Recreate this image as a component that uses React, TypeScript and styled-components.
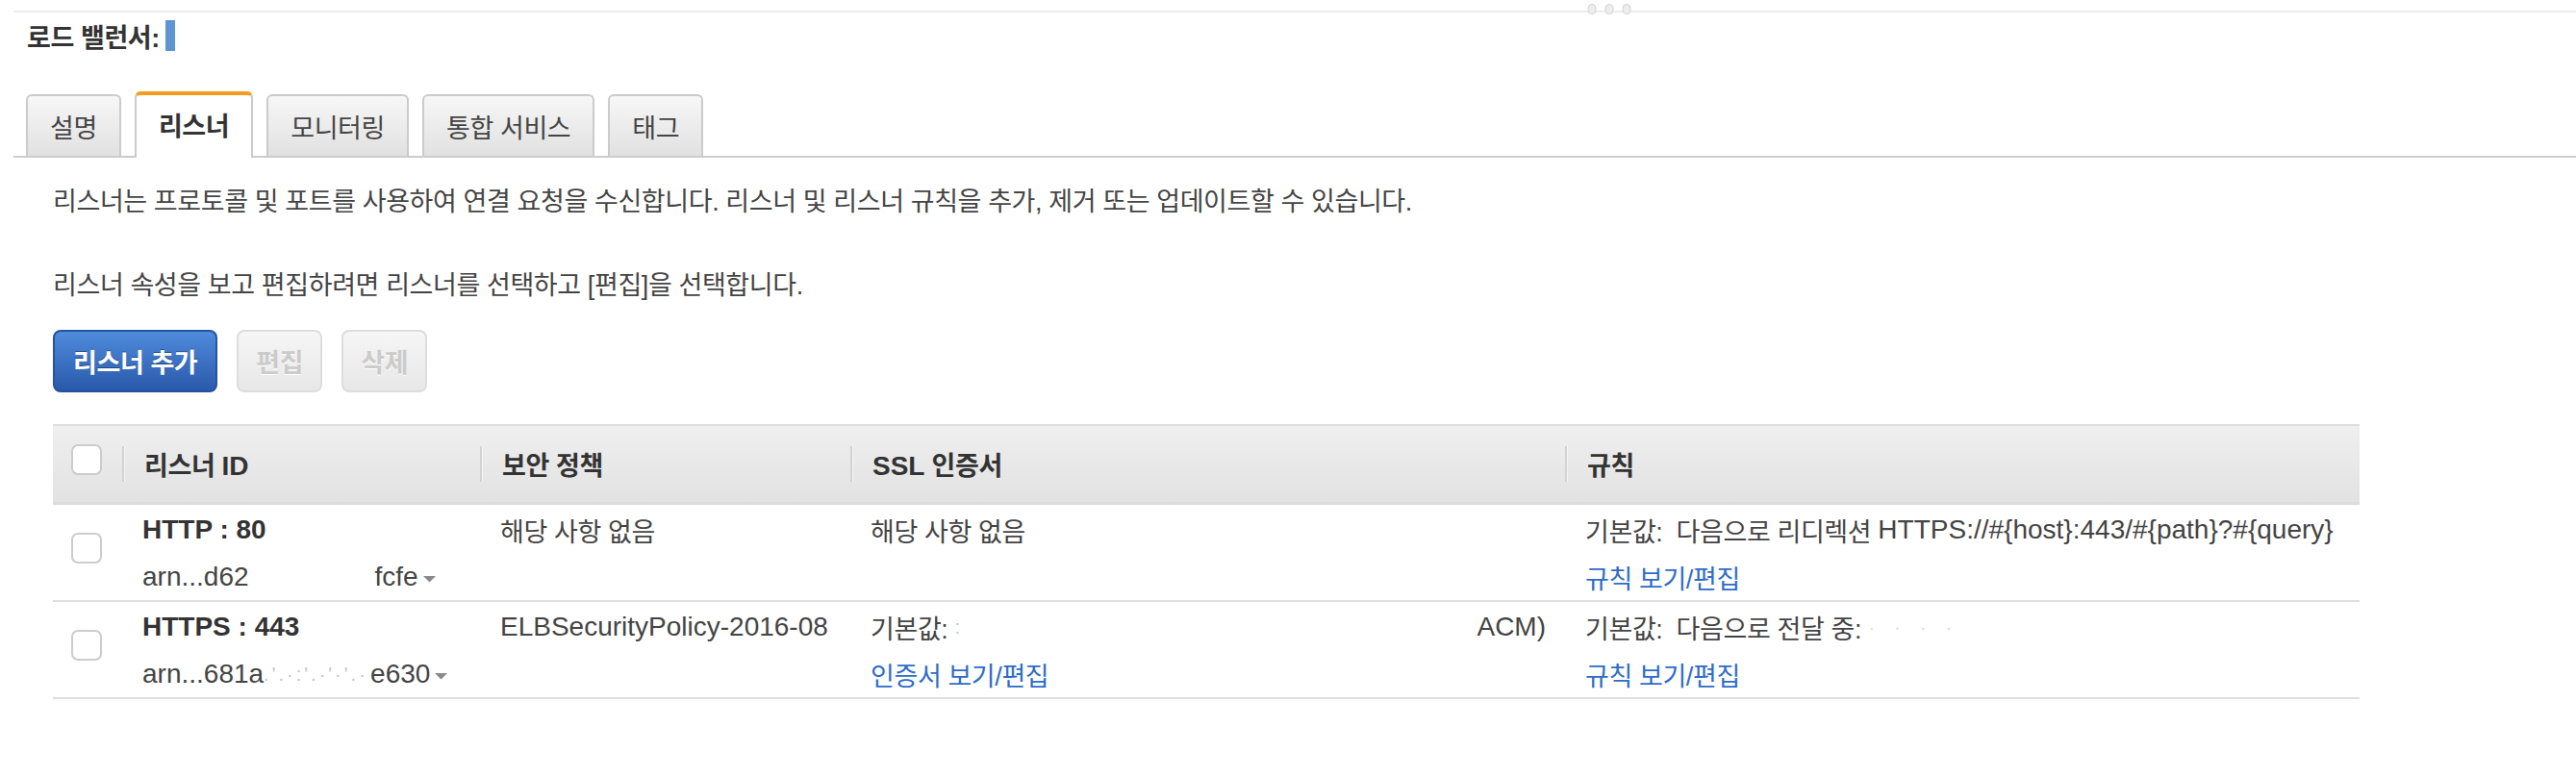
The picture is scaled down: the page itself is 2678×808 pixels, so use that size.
import React from "react";
import styled, { createGlobalStyle } from "styled-components";

const GlobalStyle = createGlobalStyle`
  html, body {
    margin: 0;
    padding: 0;
    background: #fff;
  }
  body {
    font-family: "Liberation Sans", "Noto Sans CJK KR", sans-serif;
    font-size: 27px;
    letter-spacing: -0.4px;
    color: #444;
    width: 2678px;
    height: 808px;
    overflow: hidden;
  }
`;

const TopBar = styled.div`
  position: relative;
  margin-left: 14px;
  padding-top: 11px;
`;

const TopRule = styled.div`
  height: 2px;
  background: #ececec;
`;

const Handle = styled.svg`
  position: absolute;
  left: 1636px;
  top: 4px;
`;

const TitleRow = styled.div`
  display: flex;
  align-items: center;
  gap: 6px;
  height: 40px;
  margin-top: 4px;
  padding-left: 28px;
  font-weight: bold;
  color: #333;
`;

const NameMark = styled.span`
  width: 10px;
  height: 32px;
  background: #5e94d2;
`;

const TabBar = styled.div`
  display: flex;
  align-items: flex-end;
  gap: 14px;
  margin: 38px 0 0 14px;
  padding-left: 13px;
  border-bottom: 2px solid #cccccc;
`;

const Tab = styled.div<{ $active?: boolean }>`
  box-sizing: border-box;
  display: flex;
  align-items: center;
  height: ${(p) => (p.$active ? "69px" : "64px")};
  margin-bottom: ${(p) => (p.$active ? "-2px" : "0")};
  padding: 0 23px ${(p) => (p.$active ? "4px" : "0")};
  border: 2px solid #cbcbcb;
  border-bottom: none;
  border-top: ${(p) => (p.$active ? "4px solid #f29d1d" : "2px solid #cbcbcb")};
  border-radius: 6px 6px 0 0;
  background: ${(p) =>
    p.$active ? "#fff" : "linear-gradient(#f7f7f7, #e1e1e1)"};
  font-weight: ${(p) => (p.$active ? "bold" : "normal")};
  color: ${(p) => (p.$active ? "#333" : "#444")};
  white-space: nowrap;
`;

const Content = styled.div`
  padding-left: 55px;
`;

const Para = styled.p<{ $gap: number }>`
  margin: ${(p) => p.$gap}px 0 0;
  line-height: 36px;
  white-space: nowrap;
`;

const Toolbar = styled.div`
  display: flex;
  gap: 20px;
  margin-top: 28px;
`;

const Button = styled.button<{ $primary?: boolean }>`
  box-sizing: border-box;
  height: 65px;
  padding: 0 ${(p) => (p.$primary ? "19px" : "18px")};
  border-radius: 8px;
  font-family: inherit;
  font-size: 27px;
  letter-spacing: -0.4px;
  font-weight: bold;
  cursor: default;
  border: 2px solid ${(p) => (p.$primary ? "#2552a2" : "#dddddd")};
  background: ${(p) =>
    p.$primary
      ? "linear-gradient(#4f8bdc, #2a59aa)"
      : "linear-gradient(#f6f6f6, #e7e7e7)"};
  color: ${(p) => (p.$primary ? "#fff" : "#cbcbcb")};
  text-shadow: ${(p) =>
    p.$primary ? "0 -1px 0 rgba(0,0,0,0.35)" : "0 1px 0 #fff"};
`;

const Table = styled.div`
  width: 2398px;
  margin-top: 33px;
`;

const cols = "72px 372px 385px 743px 826px";

const HeadRow = styled.div`
  box-sizing: border-box;
  display: grid;
  grid-template-columns: ${cols};
  align-items: center;
  height: 84px;
  border-top: 2px solid #dedede;
  border-bottom: 3px solid #dcdcdc;
  background: linear-gradient(#efefef, #e2e2e2);
  font-weight: bold;
  color: #333;
`;

const HeadLabel = styled.div`
  display: flex;
  align-items: center;
  height: 37px;
  padding-left: 21px;
  border-left: 2px solid #d3d3d3;
  box-shadow: inset 1px 0 0 #f4f4f4;
  white-space: nowrap;
`;

const CheckCell = styled.div`
  display: flex;
  align-items: center;
  align-self: stretch;
  padding-left: 19px;
`;

const Checkbox = styled.span`
  box-sizing: border-box;
  width: 32px;
  height: 32px;
  margin-bottom: 10px;
  border: 2px solid #cccccc;
  border-radius: 7px;
  background: #fff;
`;

const BodyRow = styled.div`
  box-sizing: border-box;
  display: grid;
  grid-template-columns: ${cols};
  height: 101px;
  border-bottom: 2px solid #dfdfdf;
`;

const Cell = styled.div`
  display: flex;
  flex-direction: column;
  gap: 13px;
  padding: 8px 20px 0 21px;
  min-width: 0;
`;

const Line = styled.div<{ $spread?: boolean; $bold?: boolean }>`
  display: flex;
  align-items: center;
  justify-content: ${(p) => (p.$spread ? "space-between" : "flex-start")};
  height: 36px;
  white-space: pre;
  font-weight: ${(p) => (p.$bold ? "bold" : "normal")};
  color: ${(p) => (p.$bold ? "#333" : "#444")};
`;

const Latin = styled.span`
  font-size: 28px;
  letter-spacing: 0;
`;

const Redacted = styled.span<{ $w: number; $tint?: string }>`
  display: inline-block;
  width: ${(p) => p.$w}px;
  color: ${(p) => p.$tint || "#c4c4c4"};
  font-size: 20px;
  letter-spacing: 3px;
  overflow: hidden;
`;

const Link = styled.a`
  color: #2e6cc7;
  text-decoration: none;
`;

const Caret = () => (
  <svg width="15" height="8" viewBox="0 0 15 8" style={{ marginLeft: 4, marginTop: 4 }}>
    <path d="M1 1h13L7.5 7.5z" fill="#8a8a8a" />
  </svg>
);

export default function App() {
  return (
    <>
      <GlobalStyle />
      <TopBar>
        <TopRule />
        <Handle width="46" height="11" viewBox="0 0 46 11">
          {[1, 19, 37].map((x) => (
            <rect key={x} x={x} y={0.5} width={8} height={10} rx={4} fill="#ededed" stroke="#d2d2d2" />
          ))}
        </Handle>
      </TopBar>

      <TitleRow>
        로드 밸런서:
        <NameMark />
      </TitleRow>

      <TabBar>
        <Tab>설명</Tab>
        <Tab $active>리스너</Tab>
        <Tab>모니터링</Tab>
        <Tab>통합 서비스</Tab>
        <Tab>태그</Tab>
      </TabBar>

      <Content>
        <Para $gap={28}>
          리스너는 프로토콜 및 포트를 사용하여 연결 요청을 수신합니다. 리스너 및 리스너 규칙을 추가, 제거 또는 업데이트할 수 있습니다.
        </Para>
        <Para $gap={51}>
          리스너 속성을 보고 편집하려면 리스너를 선택하고 [편집]을 선택합니다.
        </Para>

        <Toolbar>
          <Button $primary>리스너 추가</Button>
          <Button disabled>편집</Button>
          <Button disabled>삭제</Button>
        </Toolbar>

        <Table>
          <HeadRow>
            <CheckCell>
              <Checkbox />
            </CheckCell>
            <HeadLabel>
              <span>
                리스너 <Latin>ID</Latin>
              </span>
            </HeadLabel>
            <HeadLabel>보안 정책</HeadLabel>
            <HeadLabel>
              <span>
                <Latin>SSL</Latin> 인증서
              </span>
            </HeadLabel>
            <HeadLabel>규칙</HeadLabel>
          </HeadRow>

          <BodyRow>
            <CheckCell>
              <Checkbox />
            </CheckCell>
            <Cell>
              <Line $bold>
                <Latin>HTTP : 80</Latin>
              </Line>
              <Line>
                <Latin>arn...d62</Latin>
                <Redacted $w={131} />
                <Latin>fcfe</Latin>
                <Caret />
              </Line>
            </Cell>
            <Cell>
              <Line>해당 사항 없음</Line>
            </Cell>
            <Cell>
              <Line>해당 사항 없음</Line>
            </Cell>
            <Cell>
              <Line>
                기본값:  다음으로 리디렉션 <Latin>HTTPS://#{"{host}"}:443/#{"{path}"}?#{"{query}"}</Latin>
              </Line>
              <Line>
                <Link href="#">규칙 보기/편집</Link>
              </Line>
            </Cell>
          </BodyRow>

          <BodyRow>
            <CheckCell>
              <Checkbox />
            </CheckCell>
            <Cell>
              <Line $bold>
                <Latin>HTTPS : 443</Latin>
              </Line>
              <Line>
                <Latin>arn...681a</Latin>
                <Redacted $w={111}>.'.·:'.·'·'.·</Redacted>
                <Latin>e630</Latin>
                <Caret />
              </Line>
            </Cell>
            <Cell>
              <Line>
                <Latin>ELBSecurityPolicy-2016-08</Latin>
              </Line>
            </Cell>
            <Cell>
              <Line $spread>
                <span>
                  기본값: <Redacted $w={10}>:</Redacted>
                </span>
                <Latin>ACM)</Latin>
              </Line>
              <Line>
                <Link href="#">인증서 보기/편집</Link>
              </Line>
            </Cell>
            <Cell>
              <Line>
                기본값:  다음으로 전달 중: <Redacted $w={110} $tint="#d3def0">·  ·  ·  ·</Redacted>
              </Line>
              <Line>
                <Link href="#">규칙 보기/편집</Link>
              </Line>
            </Cell>
          </BodyRow>
        </Table>
      </Content>
    </>
  );
}
